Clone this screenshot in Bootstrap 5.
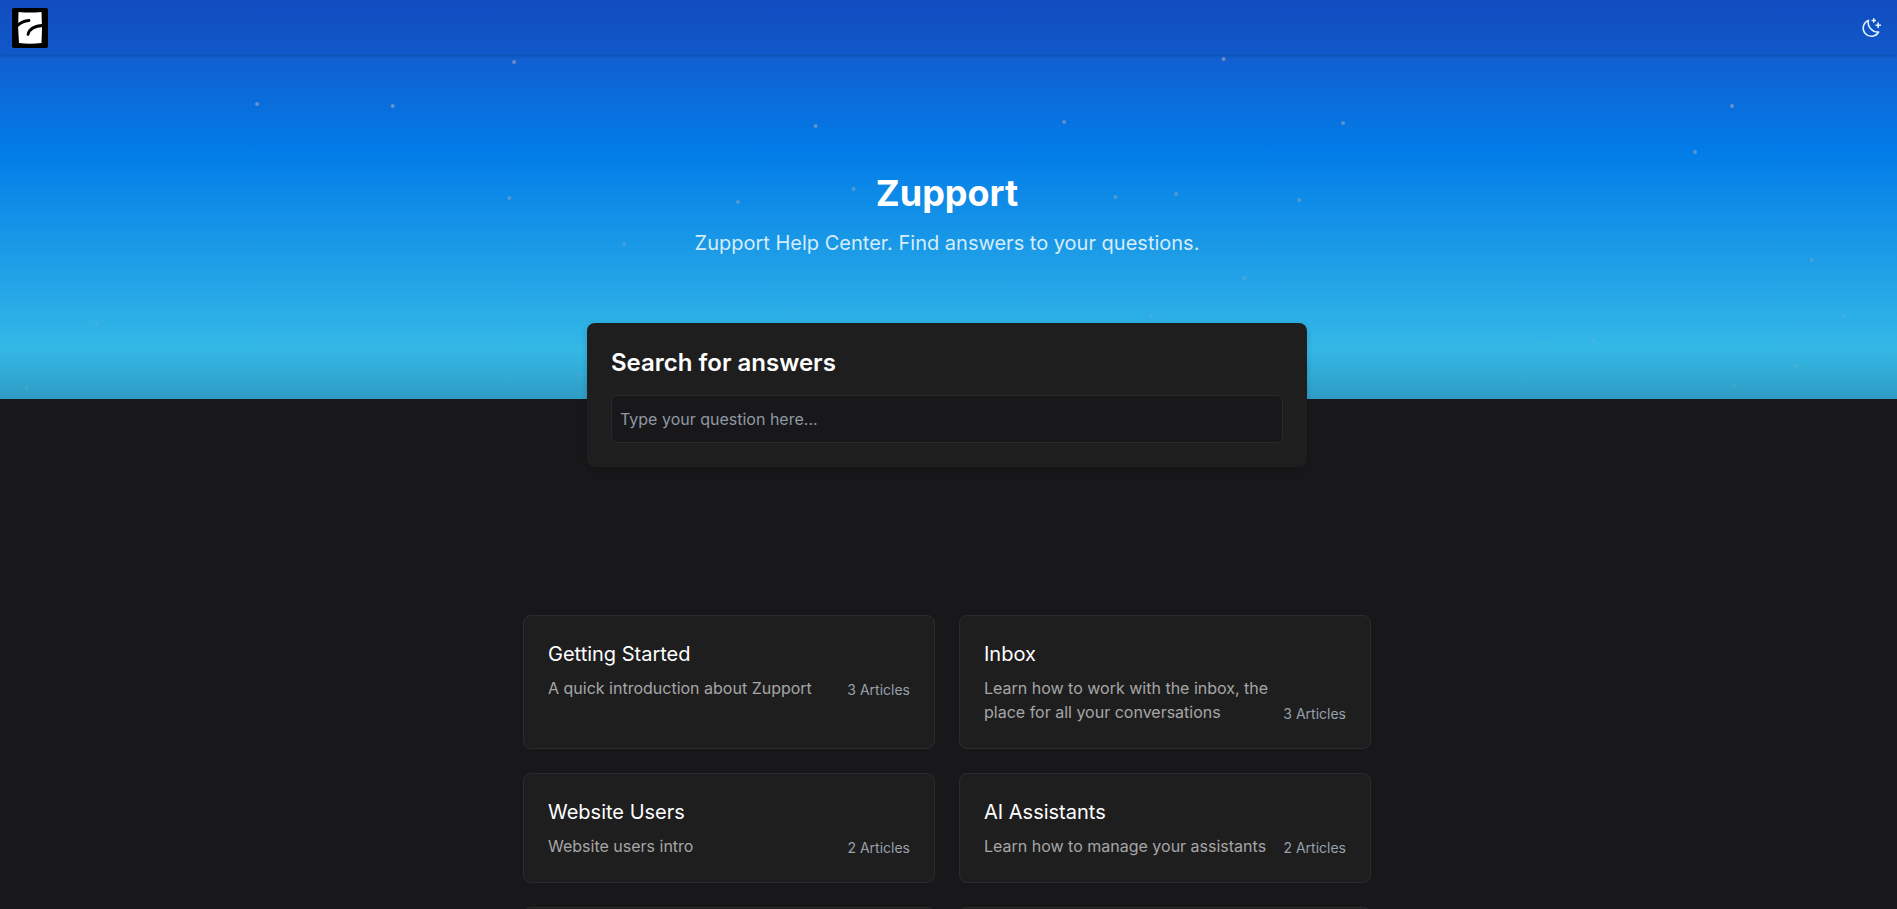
<!DOCTYPE html>
<html lang="en" data-bs-theme="dark">
<head>
<meta charset="utf-8">
<meta name="viewport" content="width=device-width, initial-scale=1">
<title>Zupport Help Center</title>
<link href="https://cdn.jsdelivr.net/npm/bootstrap@5.3.0/dist/css/bootstrap.min.css" rel="stylesheet">
<style>
  body { background: #18181a; color: #fff; font-family: Inter, "Liberation Sans", sans-serif; font-size: 16px; line-height: 24px; }
  .topbar { background: rgba(18, 76, 184, .3); height: 55px; box-shadow: 0 1px 3px rgba(0, 0, 0, .18); }
  .theme-toggle { color: #e0f2fe; line-height: 0; }
  .hero { height: 399px; background: linear-gradient(180deg, #124cc4 0, #1160d1 60px, #027ce8 150px, #34b8e6 349px, #2e9cc4 100%); }
  .stars { inset: 0; pointer-events: none; }
  .page-center { padding-right: 3px; }
  .hero-text { padding-top: 118px; }
  .hero-title { font-size: 36px; line-height: 40px; font-weight: 700; }
  .hero-sub { font-size: 20px; line-height: 28px; color: #d5edfb; }
  .search-card { max-width: 720px; margin-top: -76px; background: #1e1e1f; border-radius: 8px; box-shadow: 0 2px 6px rgba(0, 0, 0, .16); }
  .search-title { font-size: 24px; line-height: 32px; font-weight: 600; }
  .search-box { height: 48px; padding: 0 8px; background: #18181a; border: 1px solid #29292c; border-radius: 6px; }
  .search-box::placeholder { color: #8f98a3; }
  .topics { max-width: 848px; margin-top: 148px; }
  .topic { background: #1e1e1f; border: 1px solid #2c2c2f; border-radius: 8px; color: #fff; }
  .topic-title { font-size: 20px; line-height: 28px; font-weight: 400; }
  .topic-desc { color: #a6a6a6; }
  .topic-count { font-size: 14px; line-height: 20px; color: #98a0aa; }
</style>
</head>
<body>
<div class="hero position-relative">
  <svg class="stars position-absolute w-100 h-100" aria-hidden="true" fill="#b4b0b8">
    <g opacity=".55"><circle cx="27.1%" cy="62" r="2"/><circle cx="64.5%" cy="59" r="2"/><circle cx="13.55%" cy="104" r="2"/><circle cx="20.7%" cy="106" r="2"/><circle cx="91.3%" cy="106" r="2"/></g>
    <g opacity=".5"><circle cx="43%" cy="126" r="2"/><circle cx="56.1%" cy="122" r="2"/><circle cx="70.8%" cy="123" r="2"/><circle cx="89.35%" cy="152" r="2"/></g>
    <g opacity=".4"><circle cx="26.85%" cy="198" r="2"/><circle cx="38.9%" cy="202" r="2"/><circle cx="45%" cy="189" r="2"/><circle cx="58.8%" cy="197" r="2"/><circle cx="62%" cy="194" r="2"/><circle cx="68.5%" cy="200" r="2"/></g>
    <g opacity=".26"><circle cx="32.9%" cy="244" r="2"/><circle cx="95.5%" cy="260" r="2"/><circle cx="65.6%" cy="278" r="2"/></g>
    <g opacity=".16"><circle cx="5.1%" cy="323" r="2"/><circle cx="41.5%" cy="312" r="2"/><circle cx="60.7%" cy="316" r="2"/><circle cx="97.2%" cy="316" r="2"/><circle cx="81.4%" cy="344" r="2"/><circle cx="84%" cy="341" r="2"/><circle cx="94.7%" cy="366" r="2"/><circle cx="91.4%" cy="386" r="2"/><circle cx="1.4%" cy="388" r="2"/><circle cx="30.5%" cy="376" r="2"/></g>
  </svg>
  <header class="topbar position-relative d-flex justify-content-between align-items-center">
    <a href="#" class="d-block ms-2 ps-1 lh-1" aria-label="Zupport home">
      <svg class="d-block" width="36" height="40" viewBox="0 0 36 40">
        <rect width="36" height="40" rx="2" fill="#000"/>
        <path d="M6.500 4 Q18 5 29.500 4 Q30.500 20 29.500 35 Q18 36.500 7 35 Q5.500 20 6.500 4Z" fill="#fff"/>
        <path d="M5 18 Q10 13 17 12.500 M16 26.500 Q18 18 31 17.500" fill="none" stroke="#000" stroke-width="2.800" stroke-linecap="round"/>
      </svg>
    </a>
    <button type="button" class="theme-toggle btn border-0 p-0 me-3" aria-label="Toggle dark mode">
      <svg width="20" height="20" viewBox="0 0 20 20" fill="none" stroke="currentColor" stroke-width="1.600" stroke-linecap="round" stroke-linejoin="round">
        <path d="M7.400 2.400 A8.200 8.200 0 1 0 17.600 14 A9.700 9.700 0 0 1 7.400 2.400Z"/>
        <path d="M12.800 .9v3.200M11.200 2.500h3.200M17.200 5v4.400M15 7.200h4.400"/>
      </svg>
    </button>
  </header>
  <div class="hero-text page-center position-relative text-center">
    <h1 class="hero-title mb-3">Zupport</h1>
    <p class="hero-sub mb-0">Zupport Help Center. Find answers to your questions.</p>
  </div>
</div>
<main class="page-center position-relative">
  <form class="search-card mx-auto p-4">
    <label for="question" class="search-title d-block mb-3">Search for answers</label>
    <input id="question" type="text" class="search-box d-block w-100" placeholder="Type your question here...">
  </form>
  <div class="topics mx-auto">
    <div class="row row-cols-1 row-cols-md-2 g-4">
      <div class="col"><a href="#" class="topic d-block h-100 p-4 text-decoration-none">
        <h2 class="topic-title mb-2">Getting Started</h2>
        <div class="d-flex justify-content-between align-items-end gap-2"><span class="topic-desc">A quick introduction about Zupport</span><span class="topic-count text-nowrap">3 Articles</span></div>
      </a></div>
      <div class="col"><a href="#" class="topic d-block h-100 p-4 text-decoration-none">
        <h2 class="topic-title mb-2">Inbox</h2>
        <div class="d-flex justify-content-between align-items-end gap-2"><span class="topic-desc">Learn how to work with the inbox, the place for all your conversations</span><span class="topic-count text-nowrap">3 Articles</span></div>
      </a></div>
      <div class="col"><a href="#" class="topic d-block h-100 p-4 text-decoration-none">
        <h2 class="topic-title mb-2">Website Users</h2>
        <div class="d-flex justify-content-between align-items-end gap-2"><span class="topic-desc">Website users intro</span><span class="topic-count text-nowrap">2 Articles</span></div>
      </a></div>
      <div class="col"><a href="#" class="topic d-block h-100 p-4 text-decoration-none">
        <h2 class="topic-title mb-2">AI Assistants</h2>
        <div class="d-flex justify-content-between align-items-end gap-2"><span class="topic-desc">Learn how to manage your assistants</span><span class="topic-count text-nowrap">2 Articles</span></div>
      </a></div>
      <div class="col"><div class="topic h-100 p-4"></div></div>
      <div class="col"><div class="topic h-100 p-4"></div></div>
    </div>
  </div>
</main>
<script src="https://cdn.jsdelivr.net/npm/bootstrap@5.3.0/dist/js/bootstrap.bundle.min.js"></script>
</body>
</html>
